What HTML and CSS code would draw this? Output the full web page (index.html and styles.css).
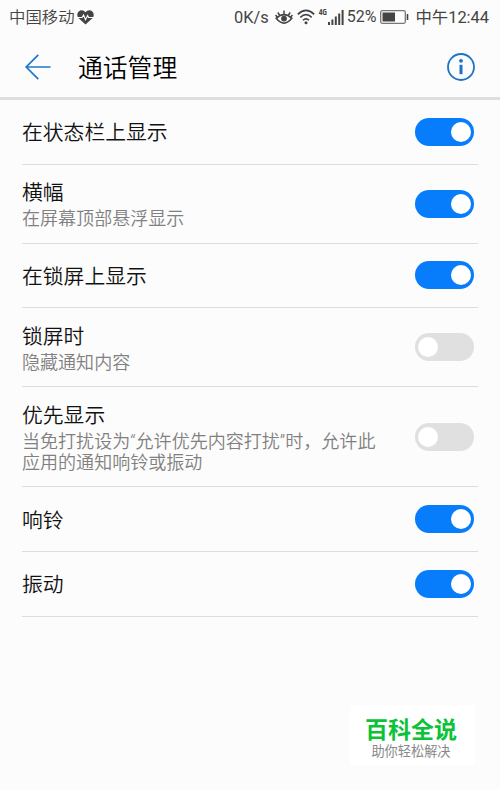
FILE: index.html
```
<!DOCTYPE html>
<html lang="zh-CN">
<head>
    <meta charset="UTF-8">
    <meta name="viewport" content="width=device-width, initial-scale=1.0">
    <title>通话管理</title>

    <link rel="stylesheet" href="styles.css">
</head>
<body>
    <div class="status-bar">
        <span class="carrier">中国移动</span>
        <svg class="icon-heart" width="17" height="15" viewBox="0 0 17 15">
            <path fill="#444" d="M8.5 14.6 1.4 7.9C-.3 6 .1 2.900 1.700 1.400 3.700-.4 6.900 0 8.500 2.300 10.100 0 13.300-.4 15.300 1.400 16.900 2.900 17.300 6 15.600 7.900Z"/>
            <path fill="none" stroke="#fcfcfc" stroke-width="1.100" d="M0 7.500H5L6.600 5 8.500 9.700 10.600 5.500 11.600 7.500H17"/>
        </svg>
        <span class="speed">0K/s</span>
        <svg class="icon-eye" width="18" height="16" viewBox="0 0 18 16" fill="none" stroke="#444">
            <path stroke-width="1.600" d="M1.200 9.300Q9 2 16.800 9.300 9 19 1.200 9.300Z"/>
            <circle cx="9" cy="9.600" r="2.900" fill="#444" stroke="none"/>
            <path stroke-width="1.500" d="M9 5.500V1.500M4.900 6.500 2.800 3.500M13.100 6.500 15.200 3.500M2.500 8.500 .6 6M15.500 8.500 17.400 6"/>
        </svg>
        <svg class="icon-wifi" width="18" height="16" viewBox="0 0 18 16" fill="none" stroke="#444" stroke-width="1.600">
            <path d="M.8 5.300Q9-2.500 17.200 5.300M3.300 8.400Q9 2.900 14.700 8.400M5.900 11.300Q9 8.300 12.100 11.300"/>
            <circle cx="9" cy="13.800" r="1.500" fill="#444" stroke="none"/>
        </svg>
        <span class="network">4G</span>
        <svg class="icon-signal" width="16" height="15" viewBox="0 0 16 15" fill="#444">
            <path d="M0 12h2v3H0zM3.400 9.500h2V15h-2zM6.800 6.500h2V15h-2zM10.200 3.500h2V15h-2zM13.600 0h2v15h-2z"/>
        </svg>
        <span class="percent">52%</span>
        <svg class="icon-battery" width="29" height="14" viewBox="0 0 29 14">
            <rect x=".7" y=".7" width="24.600" height="12.600" rx="1.500" fill="none" stroke="#777" stroke-width="1.300"/>
            <path fill="#444" d="M2.500 2.500H15v9H2.500zM26.700 4h1.600v6h-1.600z"/>
        </svg>
        <span class="clock">中午12:44</span>
    </div>

    <div class="header">
        <svg class="icon-back" width="26" height="26" viewBox="0 0 26 26" fill="none" stroke="#1b78d0" stroke-width="1.700">
            <path d="M13.300.8 1.200 13 13.300 25.200M1.200 13H25.500"/>
        </svg>
        <h1>通话管理</h1>
        <svg class="icon-info" width="28" height="28" viewBox="0 0 28 28">
            <circle cx="14" cy="14" r="13" fill="none" stroke="#1b74c5" stroke-width="1.800"/>
            <circle cx="14" cy="7.800" r="1.900" fill="#1b74c5"/>
            <path fill="#1b74c5" d="M12.500 11.800h3v9.400h-3z"/>
        </svg>
    </div>

    <div class="settings">
        <div class="row">
            <div class="label">
                <h2>在状态栏上显示</h2>
            </div>
            <div class="toggle on"></div>
        </div>
        <div class="row row-double">
            <div class="label">
                <h2>横幅</h2>
                <p>在屏幕顶部悬浮显示</p>
            </div>
            <div class="toggle on"></div>
        </div>
        <div class="row">
            <div class="label">
                <h2>在锁屏上显示</h2>
            </div>
            <div class="toggle on"></div>
        </div>
        <div class="row row-double">
            <div class="label">
                <h2>锁屏时</h2>
                <p>隐藏通知内容</p>
            </div>
            <div class="toggle"></div>
        </div>
        <div class="row row-triple">
            <div class="label">
                <h2>优先显示</h2>
                <p>当免打扰设为“允许优先内容打扰”时，允许此<br>应用的通知响铃或振动</p>
            </div>
            <div class="toggle"></div>
        </div>
        <div class="row">
            <div class="label">
                <h2>响铃</h2>
            </div>
            <div class="toggle on"></div>
        </div>
        <div class="row">
            <div class="label">
                <h2>振动</h2>
            </div>
            <div class="toggle on"></div>
        </div>
    </div>

    <div class="watermark">
        <strong>百科全说</strong>
        <span>助你轻松解决</span>
    </div>
</body>
</html>
```

FILE: styles.css
```
* {
    box-sizing: border-box;
}

body {
    margin: 0;
    height: 790px;
    overflow: hidden;
    background-color: #fcfcfc;
    font-family: Roboto, "Noto Sans CJK SC", sans-serif;
    color: #111;
}

h1, h2, p {
    margin: 0;
    font-weight: 350;
    white-space: nowrap;
}

.status-bar {
    display: flex;
    align-items: center;
    height: 34px;
    padding: 0 11px 0 9px;
    font-size: 16.4px;
    line-height: 34px;
    color: #444;
    white-space: nowrap;
}

.status-bar svg {
    flex: none;
}

.carrier, .speed, .clock {
    padding-top: 1px;
}

.carrier {
    font-weight: 350;
}

.icon-heart {
    margin-left: 2px;
}

.speed {
    margin-left: auto;
}

.icon-eye {
    margin-left: 6px;
}

.icon-wifi {
    margin-left: 4px;
}

.network {
    margin: -10px 0 0 4px;
    font-family: "Open Sans", Roboto, sans-serif;
    font-size: 8px;
    font-weight: 700;
    font-stretch: condensed;
    letter-spacing: -0.2px;
    line-height: 10px;
    width: 8px;
}

.icon-signal {
    margin-left: 1px;
}

.percent {
    margin-left: 3px;
    font-size: 16px;
}

.icon-battery {
    margin-left: 4px;
}

.clock {
    margin-left: 6px;
}

.header {
    display: flex;
    align-items: center;
    height: 66px;
    padding: 0 25px;
    border-bottom: 3px solid #dedede;
}

.header svg {
    margin-top: 2px;
}

.header h1 {
    margin-left: 27px;
    padding-top: 6px;
    font-size: 24.800px;
    line-height: 40px;
    color: #000;
}

.header .icon-info {
    margin-left: auto;
}

.settings {
    padding: 0 22px;
}

.row {
    display: flex;
    align-items: center;
    justify-content: space-between;
    height: 64.800px;
    padding-right: 4.500px;
    border-bottom: 1px solid #dcdcdc;
}

.row-double {
    height: 78.800px;
}

.row-triple {
    height: 100px;
}

.label {
    padding-top: 3px;
}

.row-double .label, .row-triple .label {
    padding-top: 1px;
}

.label h2 {
    font-size: 20.800px;
    line-height: 30px;
}

.label p {
    font-size: 18.050px;
    line-height: 21.500px;
    color: #808080;
}

.toggle {
    flex: none;
    width: 58.500px;
    height: 28px;
    padding: 4px 3px;
    border-radius: 14px;
    background-color: #e0e0e0;
}

.toggle::before {
    content: "";
    display: block;
    width: 20px;
    height: 20px;
    border-radius: 50%;
    background-color: #fff;
}

.toggle.on {
    background-color: #077dfc;
}

.toggle.on::before {
    margin-left: auto;
}

.watermark {
    position: absolute;
    left: 350px;
    top: 705px;
    width: 125px;
    height: 60px;
    display: flex;
    flex-direction: column;
    align-items: center;
    padding: 12px 3px 0 0;
    background-color: #fff;
}

.watermark strong {
    font-size: 23px;
    font-weight: 700;
    line-height: 28px;
    color: #0bc238;
}

.watermark span {
    font-size: 13.200px;
    line-height: 14px;
    color: #888;
}
```
